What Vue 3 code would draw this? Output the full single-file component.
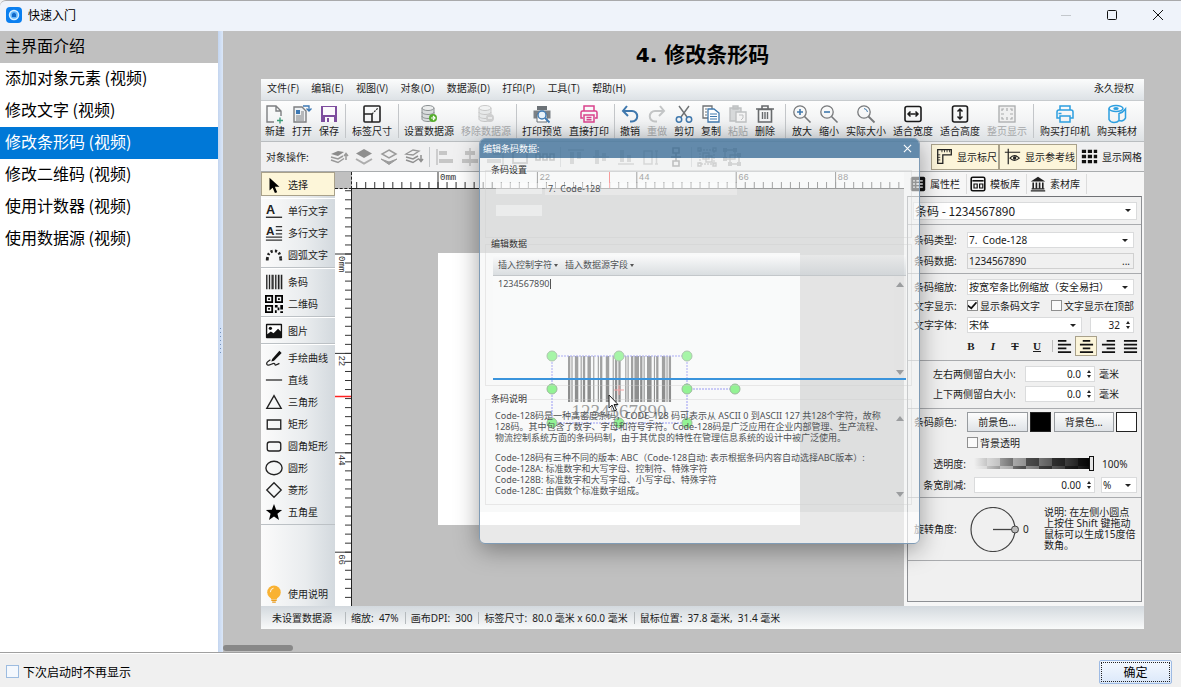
<script setup>
import { computed, onBeforeUnmount, onMounted, ref } from 'vue'

const topics = [
  { label: '主界面介绍', visited: true },
  { label: '添加对象元素 (视频)' },
  { label: '修改文字 (视频)' },
  { label: '修改条形码 (视频)' },
  { label: '修改二维码 (视频)' },
  { label: '使用计数器 (视频)' },
  { label: '使用数据源 (视频)' }
]
const current = ref(3)

const menus = ['文件(F)', '编辑(E)', '视图(V)', '对象(O)', '数据源(D)', '打印(P)', '工具(T)', '帮助(H)']

const database = (c) => `<g stroke="${c}" stroke-width="1" fill="#d9dcdd"><path d="M3 4v11c0 1.600 3 2.500 6 2.500s6-.9 6-2.500V4z"/><path fill="none" d="M3 8c0 1.600 3 2.500 6 2.500s6-.9 6-2.500M3 12c0 1.600 3 2.500 6 2.500s6-.9 6-2.500"/><ellipse cx="9" cy="4" rx="6" ry="2.500" fill="#eceeee"/></g>`

const icons = {
  new: '<path d="M9 18H2V2h9l5 5v5M11 2v5h5" fill="none" stroke="#7d7f81" stroke-width="1.400"/><path d="M12 16.500h6M15 13.500v6" stroke="#3f9c78" stroke-width="1.400"/>',
  open: '<path d="M2 3h8l4 4v11H2z" fill="#eef1f3" stroke="#7d7f81" stroke-width="1.400"/><path d="M4 6h4v4H4z" fill="#3c78b4"/><path d="M9 8h3M9 10h3M4 12h8M4 14h8M4 16h8" stroke="#7d7f81"/><path d="M11 2h6v5M14.500 4.500L17 7l2.500-2.500" fill="none" stroke="#3c78b4" stroke-width="1.300"/>',
  save: '<path d="M2 2h16v16H2z" fill="#7e4d9e"/><path d="M4 3h12v8H4z" fill="#fbf9fc"/><path d="M6 13h9v5H6z" fill="#fbf9fc"/><path d="M8 14h2v4H8z" fill="#7e4d9e"/>',
  size: '<rect x="2" y="2" width="16" height="16" rx="1" fill="none" stroke="#222" stroke-width="1.600"/><path d="M2 10h8v8" fill="none" stroke="#222" stroke-width="1.600"/><path d="M10 10l6-6" stroke="#333" stroke-width="1.200" stroke-dasharray="2 1"/>',
  dbset: database('#8b9092') + '<circle cx="14" cy="14" r="4" fill="#55ad2c"/><path d="M12 14h3M14 12l2 2-2 2" stroke="#fff" stroke-width="1.200" fill="none"/>',
  dbdel: `<g opacity=".5">${database('#999')}<circle cx="14" cy="14" r="4" fill="#a9a9a9"/><path d="M12 14h4" stroke="#fff" stroke-width="1.200"/></g>`,
  preview: '<path d="M5 2h10v4H5z" fill="#6b7176"/><path d="M1.500 6.500h17v8h-17z" fill="#7b8186"/><path d="M5 10h10v8H5z" fill="#fff" stroke="#6b7176"/><circle cx="10" cy="11" r="4" fill="#e8f2fa" stroke="#3f7bb5" stroke-width="1.400"/><path d="M13 14l4.500 4.500" stroke="#3f7bb5" stroke-width="1.800"/>',
  print: '<g fill="none" stroke="#d9428c" stroke-width="1.500"><path d="M5 7V2h10v5M4 14H2V8.500Q2 7 3.500 7h13q1.500 0 1.500 1.500V14H16M5 11h10v7H5zM7.500 13.500h5M7.500 15.800h5"/></g>',
  undo: '<path d="M7 2L3 7l5 5M3 7h9a5 5 0 010 10.500h-2" fill="none" stroke="#3f78ad" stroke-width="2"/>',
  redo: '<path d="M13 2l4 5-5 5M17 7H8a5 5 0 000 10.500h2" fill="none" stroke="#c3c5c6" stroke-width="2"/>',
  cut: '<path d="M5 2l8 11M15 2L7 13" stroke="#6f7274" stroke-width="1.400"/><g fill="none" stroke="#3f78ad" stroke-width="1.500"><circle cx="5" cy="15.500" r="2.700"/><circle cx="15" cy="15.500" r="2.700"/></g>',
  copy: '<path d="M2 2h9v12H2z" fill="#fff" stroke="#6f7274" stroke-width="1.300"/><path d="M4 5h2M4 8h2M4 11h2" stroke="#6f7274"/><path d="M7 5h6l5 4v9H7z" fill="#fff" stroke="#3f78ad" stroke-width="1.300"/><path d="M9 10h7M9 12.500h7M9 15h7" stroke="#3f78ad"/>',
  paste: '<path d="M2 4h11v13H2zM5 2h5v3H5z" fill="#d7d9da" stroke="#bfc1c2" stroke-width="1.400"/><path d="M8 8h10v10H8z" fill="#f4f4f4" stroke="#bfc1c2" stroke-width="1.400"/><path d="M11 11h4v3l-2 2" fill="none" stroke="#bfc1c2"/>',
  trash: '<path d="M1 5h18M7 4.500V2h6v2.500" fill="none" stroke="#686b6d" stroke-width="1.600"/><path d="M3.500 5.500h13V18h-13z" fill="none" stroke="#686b6d" stroke-width="1.600"/><path d="M7.500 8v7M10 8v7M12.500 8v7" stroke="#686b6d" stroke-width="1.400"/>',
  zoomin: '<circle cx="8" cy="8" r="6.200" fill="none" stroke="#77797b" stroke-width="1.300"/><path d="M12.500 12.500l6 6" stroke="#77797b" stroke-width="1.600"/><path d="M5 8h6M8 5v6" stroke="#3f78ad" stroke-width="1.600"/>',
  zoomout: '<circle cx="8" cy="8" r="6.200" fill="none" stroke="#77797b" stroke-width="1.300"/><path d="M12.500 12.500l6 6" stroke="#77797b" stroke-width="1.600"/><path d="M5 8h6" stroke="#3f78ad" stroke-width="1.600"/>',
  zoom: '<circle cx="8" cy="8" r="6.200" fill="none" stroke="#77797b" stroke-width="1.300"/><path d="M12.500 12.500l6 6" stroke="#77797b" stroke-width="1.800"/><path d="M8 4.500q3 .5 3.500 3.500" fill="none" stroke="#3f78ad"/>',
  fitw: '<rect x="2" y="2.500" width="16" height="15" rx="2" fill="none" stroke="#1b1b1b" stroke-width="1.600"/><path d="M5 10h10M7.500 7.500L5 10l2.500 2.500M12.500 7.500L15 10l-2.500 2.500" fill="none" stroke="#1b1b1b" stroke-width="1.500"/>',
  fith: '<rect x="2.500" y="2" width="15" height="16" rx="2" fill="none" stroke="#1b1b1b" stroke-width="1.600"/><path d="M10 5v10M7.500 7.500L10 5l2.500 2.500M7.500 12.500L10 15l2.500-2.500" fill="none" stroke="#1b1b1b" stroke-width="1.500"/>',
  fitp: '<rect x="2" y="2" width="16" height="16" fill="#f0f0f0" stroke="#a9abac" stroke-width="1.300"/><path d="M10 4v3M10 13v3M4 10h3M13 10h3M5 7V5h2M13 5h2v2M5 13v2h2M15 13v2h-2" fill="none" stroke="#a9abac" stroke-width="1.200"/>',
  buyprint: '<g fill="none" stroke="#2d9fe0" stroke-width="1.500"><path d="M5 6V2h10v4M5 14H2V8q0-2 2-2h12q2 0 2 2v6H15M5 12h10v6H5zM3.500 9.500h3"/></g>',
  buyroll: '<g fill="none" stroke="#2d9fe0" stroke-width="1.500"><ellipse cx="9" cy="4.500" rx="7" ry="3"/><ellipse cx="9" cy="4.500" rx="2" ry=".8"/><path d="M2 4.500v11q1.500 3 5 3t5-2v-7q4-1 6.500-4.500v9q-2 4-6.500 2.500"/></g>',
  layer1: '<path d="M2 7l7-3 6 1-6 4z" fill="#8b8b8b"/><path d="M2 10l7 2 5-3M2 13l7 2.500 6-4M17 13V7M15 9l2-2.500L19 9" fill="none" stroke="#999" stroke-width="1.500"/>',
  layer2: '<path d="M10 2l8 4.500-8 4.500-8-4.500z" fill="#8f8f8f"/><path d="M2 12l8 4.500 8-4.500" fill="none" stroke="#adadad" stroke-width="2"/>',
  layer3: '<path d="M10 3l7 4-7 4-7-4z" fill="none" stroke="#9b9b9b" stroke-width="1.500"/><path d="M2 12l8 3 8-3-8 5.500z" fill="#9b9b9b" stroke="#9b9b9b"/>',
  layer4: '<path d="M2 7l7-4 6 1-6 4z" fill="none" stroke="#979797" stroke-width="1.300"/><path d="M2 10l7 2 5-3M2 13l7 2.500 6-4M17 8v6M15 12l2 2.500 2-2.500" fill="none" stroke="#8f8f8f" stroke-width="1.500"/>',
  alignL: '<path d="M2 2v16" stroke="#c2c2c2" stroke-width="1.500"/><path d="M4 4h8v4H4zM4 12h14v4H4z" fill="#c6c6c6"/>',
  alignC: '<path d="M10 1v18" stroke="#c2c2c2" stroke-width="1.500"/><path d="M5 4h10v4H5zM2 12h16v4H2z" fill="#c6c6c6"/>',
  alignR: '<path d="M18 2v16" stroke="#b5b5b5" stroke-width="1.500"/><path d="M8 4h8v4H8zM2 12h14v4H2z" fill="#bbb"/>',
  box: '<rect x="3" y="5" width="14" height="11" fill="none" stroke="#a5a5a5" stroke-width="1.800"/>',
  chain: '<path d="M1 7h4v6H1zM15 7h4v6h-4zM8 7h4v6H8zM5 10h3M12 10h3" fill="none" stroke="#8d8d8d" stroke-width="1.600"/>',
  top: '<path d="M2 3h16" stroke="#b0b0b0" stroke-width="1.500"/><path d="M4 5h4v12H4zM11 5h4v7h-4z" fill="#b5b5b5"/>',
  mid: '<path d="M2 10h16" stroke="#b0b0b0" stroke-width="1.500"/><path d="M4 3h4v14H4zM11 6h4v8h-4z" fill="#b5b5b5"/>',
  bottom: '<path d="M2 17h16" stroke="#b0b0b0" stroke-width="1.500"/><path d="M4 3h4v12H4zM11 8h4v7h-4z" fill="#b5b5b5"/>',
  same: '<path d="M3 4h8v13H3zM14 4h3M14 17h3M15.500 4v13" fill="none" stroke="#b0b0b0" stroke-width="1.500"/>',
  vchain: '<path d="M7 1h6v5H7zM7 14h6v5H7zM10 6v8M5 10h10" fill="none" stroke="#777" stroke-width="1.600"/>',
  group: '<path d="M3 3h14v14H3z" fill="none" stroke="#a5a5a5" stroke-width="1.300" stroke-dasharray="2 1"/><path d="M6 6h6v6H6zM9 9h6v6H9zM1 1h3v3H1zM16 1h3v3h-3zM1 16h3v3H1zM16 16h3v3h-3z" fill="none" stroke="#9d9d9d" stroke-width="1.400"/>',
  ungroup: '<path d="M3 3h10v9H3zM8 8h9v9H8z" fill="none" stroke="#9d9d9d" stroke-width="1.400"/><path d="M1 1h4v4H1zM11 1h4v4h-4zM1 10h4v4H1zM15 15h4v4h-4zM6 15h4v4H6zM15 6h4v4h-4z" fill="#a5a5a5"/>',
  ruler: '<path d="M2 2h16v6H8v10H2z" fill="none" stroke="#222" stroke-width="1.500"/><path d="M7 2v3M10 2v3M13 2v3M16 2v3M2 8h3M2 11h3M2 14h3" stroke="#222"/>',
  guide: '<path d="M5 1v18M1 5h18" stroke="#222" stroke-width="1.400"/><path d="M7 12q5-6 11 0-6 5-11 0z" fill="none" stroke="#222" stroke-width="1.300"/><circle cx="12.500" cy="11.800" r="2" fill="#222"/>',
  grid: '<path d="M1 2h5v4H1zM8 2h5v4H8zM15 2h4v4h-4zM1 8h5v4H1zM8 8h5v4H8zM15 8h4v4h-4zM1 14h5v4H1zM8 14h5v4H8zM15 14h4v4h-4z" fill="#111"/>',
  pointer: '<path d="M5 2v14l3.500-3 2.500 6 2.500-1-2.500-6H16z" fill="#000"/>',
  line1: '<text x="1" y="13" font-family="Liberation Sans" font-size="14" font-weight="bold" fill="#222">A</text><path d="M1 17h18" stroke="#333" stroke-width="1.600"/>',
  line2: '<text x="1" y="12" font-family="Liberation Sans" font-size="13" font-weight="bold" fill="#222">A</text><path d="M12 3h7M12 7h7M12 11h7M1 14.500h18M1 18h18" stroke="#333" stroke-width="1.400"/>',
  arc: '<path d="M2.500 15Q3 6 10 5.500T17.500 15" fill="none" stroke="#222" stroke-width="3" stroke-dasharray="2.500 2.200"/><path d="M1 15h3M16 15h3" stroke="#222" stroke-width="2"/>',
  barcode: '<path d="M2 2v16M5 2v16M8 2v16M12 2v16M15 2v16M18.500 2v16" stroke="#222" stroke-width="1.500"/><path d="M9.500 2v16M16.500 2v16" stroke="#555"/>',
  qr: '<path d="M1 1h7v7H1zM12 1h7v7h-7zM1 12h7v7H1z" fill="none" stroke="#000" stroke-width="2"/><path d="M3.500 3.500h2v2h-2zM14.500 3.500h2v2h-2zM3.500 14.500h2v2h-2zM11 11h3v3h-3zM14 14h2v3h-2zM17 11h3v5h-3zM11 17h2v3h-2zM17 18h3v2h-3z" fill="#000"/>',
  image: '<rect x="1" y="2" width="18" height="16" rx="1" fill="#111"/><path d="M2.500 3.500h15v7l-3-3-5 5-3-2-4 3z" fill="#fff"/><circle cx="6" cy="7" r="1.800" fill="#111"/>',
  curve: '<path d="M8 11l8-9 2.500 2.500L10 13l-3 1z" fill="#111"/><path d="M6 12q-5 3-4 5t5 0 4 0 5-1" fill="none" stroke="#222" stroke-width="1.400"/>',
  line: '<path d="M1 10h18" stroke="#333" stroke-width="1.500"/>',
  tri: '<path d="M10 3l8 14H2z" fill="none" stroke="#222" stroke-width="1.500"/>',
  rect: '<path d="M2.500 5.500h15v10h-15z" fill="none" stroke="#222" stroke-width="1.500"/>',
  rrect: '<rect x="2.500" y="5.500" width="15" height="10" rx="2.500" fill="none" stroke="#222" stroke-width="1.500"/>',
  circle: '<ellipse cx="10" cy="10" rx="9" ry="7.500" fill="none" stroke="#222" stroke-width="1.500"/>',
  diamond: '<path d="M10 2l8 8-8 8-8-8z" fill="none" stroke="#222" stroke-width="1.500"/>',
  star: '<path d="M10 1l2.400 6.500 6.600.3-5.200 4.100L15.600 19 10 15l-5.600 4 1.800-7.100L1 7.800l6.600-.3z" fill="#000"/>',
  bulb: '<circle cx="10" cy="8" r="7.500" fill="#f9b233"/><path d="M6 13h8l-1 3H7z" fill="#f9b233"/><path d="M7 17h6M8 19h4" stroke="#e99c1f" stroke-width="1.500"/><path d="M6 8q0-4 3.500-4.500" stroke="#fff" fill="none"/>',
  list: '<rect x="1" y="1" width="18" height="18" rx="2" fill="#111"/><path d="M4 6h2M4 10h2M4 14h2M8 6h8M8 10h8M8 14h8" stroke="#fff" stroke-width="1.600"/>',
  template: '<rect x="1.500" y="1.500" width="17" height="17" rx="2" fill="none" stroke="#111" stroke-width="2"/><path d="M3 6h14" stroke="#111" stroke-width="2"/><path d="M5 10h4v5H5zM12 10h4v5h-4z" fill="none" stroke="#111" stroke-width="1.500"/>',
  bank: '<path d="M1 7l9-6 9 6z" fill="#222"/><path d="M4 8v8M8 8v8M12 8v8M16 8v8" stroke="#222" stroke-width="2"/><path d="M2 16h16M1 18.500h18" stroke="#222" stroke-width="1.500"/>'
}

const toolGroups = [
  { kind: 'first', items: [['new', '新建'], ['open', '打开'], ['save', '保存']] },
  { kind: '', items: [['size', '标签尺寸']] },
  { kind: 'tight', items: [['dbset', '设置数据源'], ['dbdel', '移除数据源', true]] },
  { kind: 'tight', items: [['preview', '打印预览'], ['print', '直接打印']] },
  { kind: 'edit', items: [['undo', '撤销'], ['redo', '重做', true], ['cut', '剪切'], ['copy', '复制'], ['paste', '粘贴', true], ['trash', '删除']] },
  { kind: '', items: [['zoomin', '放大'], ['zoomout', '缩小'], ['zoom', '实际大小'], ['fitw', '适合宽度'], ['fith', '适合高度'], ['fitp', '整页显示', true]] },
  { kind: 'last', items: [['buyprint', '购买打印机'], ['buyroll', '购买耗材']] }
]

const arrange = [
  ['layer1', 'layer2', 'layer3', 'layer4'],
  ['alignL', 'alignC', 'alignR', 'box', 'chain'],
  ['top', 'mid', 'bottom', 'same', 'vchain'],
  ['group', 'ungroup']
]

const shapes = [
  [['line1', '单行文字'], ['line2', '多行文字'], ['arc', '圆弧文字']],
  [['barcode', '条码'], ['qr', '二维码']],
  [['image', '图片']],
  [['curve', '手绘曲线'], ['line', '直线'], ['tri', '三角形'], ['rect', '矩形'], ['rrect', '圆角矩形'], ['circle', '圆形'], ['diamond', '菱形'], ['star', '五角星']]
]

// Rulers: a long mark every 22 mm, a short one every 2 mm, as many as the canvas has room for
const MAJOR = 99.4
const MINOR = MAJOR / 11
const ORIGIN_X = 86
const ORIGIN_Y = 65
const canvas = ref(null)
const area = ref({ w: 0, h: 0 })
const marks = (origin, step, from, size) => {
  const list = []
  for (let n = from; origin + n * step < size; n++) list.push({ n, at: origin + n * step })
  return list
}
const hMinor = computed(() => marks(ORIGIN_X, MINOR, -9, area.value.w))
const vMinor = computed(() => marks(ORIGIN_Y, MINOR, -7, area.value.h))
const hMajor = computed(() => marks(ORIGIN_X, MAJOR, 0, area.value.w - 20))
const vMajor = computed(() => marks(ORIGIN_Y, MAJOR, 0, area.value.h - 20))
const markText = (n) => (n ? String(n * 22) : '0mm')
const measure = () => {
  area.value = { w: canvas.value.clientWidth, h: canvas.value.clientHeight }
}
onMounted(() => {
  measure()
  window.addEventListener('resize', measure)
})
onBeforeUnmount(() => window.removeEventListener('resize', measure))

// Code-128 (set C) module widths for 1234567890
const modules = '211232' + '112232' + '131123' + '331121' + '241112' + '214121' + '124211' + '2331112'
const bars = []
let pos = 0
modules.split('').forEach((w, i) => {
  if (i % 2 === 0) bars.push({ x: pos, w: Number(w) })
  pos += Number(w)
})
const handles = [[6, 6], [73, 6], [141, 6], [6, 39], [141, 39], [189, 39], [6, 73], [73, 73], [141, 73]]

const showText = ref(true)
const textTop = ref(false)
const bgClear = ref(false)
const skipNext = ref(false)
const opacity = ref(100)
const code = ref('1234567890')
const align = ref(1)
const alignLines = [
  'M1 2h9M1 6h14M1 10h9M1 14h14',
  'M4 2h8M1 6h14M4 10h8M1 14h14',
  'M6 2h9M1 6h14M6 10h9M1 14h14',
  'M1 2h14M1 6h14M1 10h14M1 14h14'
]
</script>

<template>
  <div class="window">
    <header class="titlebar">
      <svg class="logo" viewBox="0 0 16 16"><rect width="16" height="16" rx="4" fill="#0a7ff0" /><circle cx="8" cy="8" r="4.500" fill="#63b6fa" stroke="#d9efff" stroke-width="1.500" /><path d="M6 10V7l2-1.500L10 7v3z" fill="#1268c8" /></svg>
      <h1>快速入门</h1>
      <div class="winbtns">
        <button type="button" aria-label="最小化" disabled><svg viewBox="0 0 12 12"><path d="M1 6.500h10" stroke="#c3c7cc" /></svg></button>
        <button type="button" aria-label="最大化"><svg viewBox="0 0 12 12"><rect x="1.500" y="1.500" width="9" height="9" rx="1" fill="none" stroke="#111" /></svg></button>
        <button type="button" aria-label="关闭"><svg viewBox="0 0 12 12"><path d="M1 1l10 10M11 1L1 11" stroke="#111" /></svg></button>
      </div>
    </header>

    <div class="main">
      <nav class="topics">
        <button v-for="(t, i) in topics" :key="t.label" type="button" :class="{ visited: t.visited, active: current === i }" @click="current = i">{{ t.label }}</button>
      </nav>
      <div class="splitter"><i></i></div>

      <section class="stage">
        <h2><span>4. </span>修改条形码</h2>

        <div class="app">
          <div class="menu">
            <button v-for="m in menus" :key="m" type="button">{{ m }}</button>
            <span class="license">永久授权</span>
          </div>

          <div class="toolbar">
            <div v-for="(g, gi) in toolGroups" :key="gi" class="tgroup" :class="g.kind">
              <button v-for="it in g.items" :key="it[1]" type="button" :disabled="it[2]">
                <svg viewBox="0 0 20 20" v-html="icons[it[0]]"></svg>
                <span>{{ it[1] }}</span>
              </button>
            </div>
          </div>

          <div class="arrange">
            <span class="caption">对象操作:</span>
            <div v-for="(g, gi) in arrange" :key="gi" class="agroup">
              <button v-for="n in g" :key="n" type="button" :aria-label="n"><svg viewBox="0 0 20 20" v-html="icons[n]"></svg></button>
            </div>
            <div class="toggles">
              <button type="button" class="on"><svg viewBox="0 0 20 20" v-html="icons.ruler"></svg>显示标尺</button>
              <button type="button" class="on"><svg viewBox="0 0 20 20" v-html="icons.guide"></svg>显示参考线</button>
              <button type="button"><svg viewBox="0 0 20 20" v-html="icons.grid"></svg>显示网格</button>
            </div>
          </div>

          <div class="workspace">
            <div class="shapes">
              <button type="button" class="picked"><svg viewBox="0 0 20 20" v-html="icons.pointer"></svg>选择</button>
              <div v-for="(g, gi) in shapes" :key="gi" class="sgroup">
                <button v-for="s in g" :key="s[1]" type="button"><svg viewBox="0 0 20 20" v-html="icons[s[0]]"></svg>{{ s[1] }}</button>
              </div>
              <button type="button" class="help"><svg viewBox="0 0 20 20" v-html="icons.bulb"></svg>使用说明</button>
            </div>

            <div class="board">
              <div class="corner"></div>
              <svg class="hruler">
                <path v-for="t in hMinor" :key="t.n" :d="`M${t.at} 10v6`" stroke="#333" />
                <g v-for="t in hMajor" :key="'m' + t.n">
                  <path :d="`M${t.at} 0v16`" stroke="#333" />
                  <text :x="t.at + 2" y="8">{{ markText(t.n) }}</text>
                </g>
                <path d="M257.500 0v16" stroke="#f22" />
              </svg>
              <svg class="vruler">
                <path v-for="t in vMinor" :key="t.n" :d="`M10 ${t.at}h6`" stroke="#333" />
                <g v-for="t in vMajor" :key="'m' + t.n">
                  <path :d="`M0 ${t.at}h16`" stroke="#333" />
                  <text :transform="`translate(4 ${t.at + 2}) rotate(90)`">{{ markText(t.n) }}</text>
                </g>
                <path d="M0 207.500h16" stroke="#f22" stroke-width="1.500" />
              </svg>
              <div ref="canvas" class="canvas">
                <div class="paper"></div>
                <svg class="object" viewBox="0 0 196 80">
                  <g transform="translate(22 6) scale(1.145 1)"><rect v-for="b in bars" :key="b.x" :x="b.x" y="0" :width="b.w" height="46" fill="#000" /></g>
                  <text x="73" y="68" text-anchor="middle" font-family="Liberation Serif" font-size="19" fill="#222">1234567890</text>
                  <rect x="6" y="6" width="135" height="67" fill="none" stroke="#2020f0" stroke-dasharray="2 1" />
                  <path d="M141 39h48" stroke="#2020f0" stroke-dasharray="2 1" />
                  <path d="M73 35v10M68 40h10" stroke="#f33" />
                  <circle v-for="(h, i) in handles" :key="i" :cx="h[0]" :cy="h[1]" r="5" fill="#10f010" stroke="#206820" />
                </svg>
              </div>
            </div>

            <aside class="props">
              <div class="tabs">
                <button type="button"><svg viewBox="0 0 20 20" v-html="icons.list"></svg>属性栏</button>
                <button type="button"><svg viewBox="0 0 20 20" v-html="icons.template"></svg>模板库</button>
                <button type="button"><svg viewBox="0 0 20 20" v-html="icons.bank"></svg>素材库</button>
              </div>
              <div class="sheet">
                <div class="sec s-name">
                  <span class="pick big"><select aria-label="对象"><option>条码 - 1234567890</option></select></span>
                </div>
                <div class="sec s-data">
                  <div class="row"><label for="ctype">条码类型:</label><span class="pick"><select id="ctype"><option>7.&nbsp; Code-128</option></select></span></div>
                  <div class="row"><label for="cdata">条码数据:</label><span class="more"><input id="cdata" value="1234567890"><button type="button">...</button></span></div>
                </div>
                <div class="sec s-text">
                  <div class="row"><label for="cscale">条码缩放:</label><span class="pick"><select id="cscale"><option>按宽窄条比例缩放（安全易扫）</option></select></span></div>
                  <div class="row">
                    <span class="lab">文字显示:</span>
                    <label class="check"><input v-model="showText" type="checkbox">显示条码文字</label>
                    <label class="check push"><input v-model="textTop" type="checkbox">文字显示在顶部</label>
                  </div>
                  <div class="row"><label for="cfont">文字字体:</label><span class="pick"><select id="cfont"><option>宋体</option></select></span><span class="spin small"><input aria-label="字号" value="32"></span></div>
                  <div class="row styles">
                    <span class="fmt"><button type="button"><b>B</b></button><button type="button"><i>I</i></button><button type="button"><s>T</s></button><button type="button"><u>U</u></button></span>
                    <span class="aligns"><button v-for="(d, i) in alignLines" :key="i" type="button" aria-label="对齐" :class="{ on: align === i }" @click="align = i"><svg viewBox="0 0 16 16"><path :d="d" stroke="#111" stroke-width="2" /></svg></button></span>
                  </div>
                </div>
                <div class="sec s-pad">
                  <div class="row"><label class="wide" for="padx">左右两侧留白大小:</label><span class="spin"><input id="padx" value="0.0"></span><span class="unit">毫米</span></div>
                  <div class="row"><label class="wide" for="pady">上下两侧留白大小:</label><span class="spin"><input id="pady" value="0.0"></span><span class="unit">毫米</span></div>
                </div>
                <div class="sec s-color">
                  <div class="row"><span class="lab">条码颜色:</span><button type="button" class="push-btn">前景色...</button><i class="swatch dark"></i><button type="button" class="push-btn">背景色...</button><i class="swatch"></i></div>
                  <div class="row"><span class="lab"></span><label class="check"><input v-model="bgClear" type="checkbox">背景透明</label></div>
                  <div class="row"><label class="mid" for="alpha">透明度:</label><input id="alpha" v-model="opacity" class="range" type="range" min="0" max="100"><span class="pct">{{ opacity }}%</span></div>
                  <div class="row"><label class="mid" for="shrink">条宽削减:</label><span class="spin grow"><input id="shrink" value="0.00"></span><span class="pick tiny"><select aria-label="单位"><option>%</option></select></span></div>
                </div>
                <div class="sec s-rot">
                  <span class="lab">旋转角度:</span>
                  <svg viewBox="0 0 52 45"><circle cx="25" cy="22.500" r="22" fill="none" stroke="#444" stroke-width="1.200" /><path d="M25 22.500h20" stroke="#444" stroke-width="1.300" /><circle cx="47" cy="22.500" r="3.500" fill="#bbb" stroke="#444" /></svg>
                  <span class="deg">0</span>
                  <p>说明: 在左侧小圆点<br>上按住 Shift 键拖动<br>鼠标可以生成15度倍<br>数角。</p>
                </div>
              </div>
            </aside>
          </div>

          <div class="status">
            <span>未设置数据源</span><span>缩放:&nbsp; 47%</span><span>画布DPI:&nbsp; 300</span><span>标签尺寸:&nbsp; 80.0 毫米 x 60.0 毫米</span><span>鼠标位置:&nbsp; 37.8 毫米,&nbsp; 31.4 毫米</span>
          </div>

          <div class="dialog" role="dialog" aria-label="编辑条码数据">
            <div class="dhead"><strong>编辑条码数据:</strong><button type="button" aria-label="关闭"><svg viewBox="0 0 10 10"><path d="M1 1l8 8M9 1L1 9" stroke="#fff" stroke-width="1.200" /></svg></button></div>
            <div class="dbody">
              <fieldset class="f1">
                <legend>条码设置</legend>
                <div class="frow"><i></i><span>7.&nbsp; Code-128</span></div>
                <div class="frow"><i></i></div>
              </fieldset>
              <fieldset class="f2">
                <legend>编辑数据</legend>
                <div class="dtools"><button type="button">插入控制字符</button><button type="button">插入数据源字段</button></div>
                <div class="dtext"><textarea v-model="code" aria-label="编辑数据"></textarea><span class="bar"><i class="up"></i><i class="down"></i></span><em></em></div>
              </fieldset>
              <fieldset class="f3">
                <legend>条码说明</legend>
                <div class="ddesc">
                  <div>
                    <p>Code-128码是一种高密度条码，CODE_128 码可表示从 ASCII 0 到ASCII 127 共128个字符，故称<br>128码。其中包含了数字、字母和符号字符。Code-128码是广泛应用在企业内部管理、生产流程、<br>物流控制系统方面的条码码制，由于其优良的特性在管理信息系统的设计中被广泛使用。</p>
                    <p>Code-128码有三种不同的版本: ABC（Code-128自动: 表示根据条码内容自动选择ABC版本）:<br>Code-128A: 标准数字和大写字母、控制符、特殊字符<br>Code-128B: 标准数字和大写字母、小写字母、特殊字符<br>Code-128C: 由偶数个标准数字组成。</p>
                  </div>
                  <span class="bar"><i class="up"></i><i class="down"></i></span>
                </div>
              </fieldset>
            </div>
            <div class="dfoot"></div>
          </div>

          <svg class="cursor" viewBox="0 0 12 18"><path d="M1 1v13l3-3 2.500 6 2-1-2.500-5.500H10z" fill="#fff" stroke="#222" /></svg>
        </div>
        <i class="hscroll"></i>
      </section>
    </div>

    <footer class="bottom">
      <label class="check"><input v-model="skipNext" type="checkbox">下次启动时不再显示</label>
      <button type="button" class="ok"><span>确定</span></button>
    </footer>
  </div>
</template>

<style>
body { margin: 0; background: #f0f0f0; }
</style>

<style scoped>
* { box-sizing: border-box; }
button, input, select, textarea { font: inherit; color: inherit; background: none; border: 0; margin: 0; padding: 0; border-radius: 0; outline: none; }
button { white-space: nowrap; }
svg { display: block; flex: none; }
h1, h2, p { margin: 0; font-weight: normal; }
.window { min-height: 100vh; display: flex; flex-direction: column; font-family: "Noto Sans CJK SC", "Liberation Sans", sans-serif; font-size: 10px; line-height: 12px; color: #000; background: #f0f0f0; }

.titlebar { height: 31px; flex: none; display: flex; align-items: center; padding: 0 0 2px 6px; background: #eff3fa; border-top: 1px solid #a9a9ab; border-radius: 6px 0 0 0; }
.logo { width: 16px; height: 16px; }
h1 { font-size: 12px; margin-left: 6px; flex: 1; }
.winbtns { display: flex; }
.winbtns button { width: 46px; height: 28px; display: grid; place-items: center; }
.winbtns svg { width: 12px; height: 12px; }

.main { flex: 1; display: flex; }
.topics { width: 218px; flex: none; background: #fff; }
.topics button { display: block; width: 100%; height: 32px; padding: 0 0 3px 5px; font-size: 16px; line-height: 29px; text-align: left; }
.topics .visited { background: #c0c0c0; }
.topics .active { background: #0078d7; color: #fff; }
.splitter { width: 5px; flex: none; display: flex; align-items: center; justify-content: center; background: linear-gradient(90deg, #c3d5ef, #dbe7f8); }
.splitter i { width: 1px; height: 27px; background: repeating-linear-gradient(#7693bf 0 1px, transparent 1px 4px); }
.stage { flex: 1; min-width: 0; position: relative; padding: 0 37px 0 38px; background: #c0c0c0; }
h2 { height: 48px; font-size: 21px; font-weight: bold; line-height: 45px; text-align: center; }
h2 span { font-family: "DejaVu Sans", sans-serif; font-size: 20px; }
.hscroll { position: absolute; left: 0; bottom: 1px; width: 70px; height: 6px; border-radius: 3px; background: #888; }

.app { position: relative; color: #1c1c1c; background: #f0f1f2; }
.menu { display: flex; align-items: center; gap: 12px; height: 22px; padding: 0 10px 3px 6px; background: linear-gradient(#fbfcfc, #dde2e6); border-bottom: 1px solid #c7cbce; }
.license { margin-left: auto; }
.toolbar { height: 41px; display: flex; align-items: center; background: linear-gradient(#fdfdfd, #f2f3f4 50%, #dde1e4); border-bottom: 1px solid #b9bdc0; }
.tgroup { display: flex; gap: 7px; padding: 0 6px; border-right: 1px solid #c3c6c9; height: 34px; }
.tgroup.first { padding-left: 4px; }
.tgroup.tight { padding: 0 5px; }
.tgroup.edit { padding: 0 10px 0 5px; }
.tgroup.last { border-right: 0; }
.tgroup button { display: flex; flex-direction: column; align-items: center; gap: 1px; }
.tgroup svg { width: 20px; height: 20px; }
.tgroup button:disabled { color: #a6a8aa; }
.arrange { height: 30px; display: flex; align-items: center; padding: 0 0 0 5px; background: #f0f0f1; border-bottom: 1px solid #a9acae; }
.caption { width: 58px; }
.agroup { display: flex; gap: 5px; padding: 0 5px; }
.agroup + .agroup { border-left: 1px solid #c3c6c9; }
.agroup svg { width: 20px; height: 20px; }
.toggles { margin-left: auto; display: flex; }
.toggles button { display: flex; align-items: center; gap: 4px; height: 26px; padding: 0 2px 0 4px; }
.toggles svg { width: 17px; height: 17px; }
.toggles .on { background: #fcf5da; border: 1px solid #a9a18a; padding: 0 1px 0 4px; }

.workspace { display: flex; }
.shapes { width: 74px; flex: none; display: flex; flex-direction: column; background: linear-gradient(90deg, #fbfbfb, #e9ecee 60%, #d3d9de); }
.shapes button { display: flex; align-items: center; gap: 5px; width: 100%; height: 22px; padding-left: 4px; }
.shapes svg { width: 18px; height: 18px; }
.shapes .picked { background: #fdf6d9; border: 1px solid #a9a18a; height: 24px; margin-bottom: 2px; padding: 1px 0 0 3px; }
.sgroup { padding: 1px 0 1px; border-top: 1px solid #fff; border-bottom: 1px solid #bcc1c5; }
.sgroup + .sgroup { padding-top: 2px; }
.shapes .help { margin: auto 0 1px; }
.board { flex: 1; min-width: 0; display: grid; grid-template: 17px 1fr / 17px 1fr; background: #fff; }
.corner { background: #c0c0c0; border-right: 1px dashed #222; border-bottom: 1px dashed #222; }
.hruler { width: 100%; height: 17px; border-bottom: 1px solid #222; background: #fff; }
.vruler { width: 17px; height: 100%; min-height: 417px; border-right: 1px solid #222; background: #fff; }
.hruler, .vruler { overflow: hidden; font: 9px "Liberation Mono", monospace; fill: #333; }
.canvas { position: relative; overflow: hidden; background: #c0c0c0; }
.paper { position: absolute; left: 86px; top: 64px; width: 362px; height: 272px; background: #fff; }
.object { position: absolute; left: 194px; top: 161px; width: 196px; height: 80px; }

.props { width: 240px; flex: none; display: flex; flex-direction: column; padding: 0 2px 4px 3px; background: #f6f6f6; }
.tabs { height: 24px; display: flex; align-items: center; }
.tabs button { display: flex; align-items: center; gap: 4px; width: 60px; height: 20px; padding-left: 3px; border-right: 1px solid #dcdcdc; }
.tabs svg { width: 16px; height: 16px; }
.sheet { flex: 1; border: 1px solid #8e9094; border-top-color: #707276; background: #f0f0f0; font-family: "Noto Sans", "Noto Sans CJK SC", sans-serif; }
.sec { border-bottom: 1px solid #a9abae; }
.row { display: flex; align-items: center; }
.row > label:not(.check), .lab { flex: none; width: 59px; padding-left: 6px; }
.row > label.wide { width: 117px; padding-left: 25px; }
.row > label.mid { width: 66px; padding: 0 8px 0 0; text-align: right; }
.s-name { padding: 5px 4px 4px 5px; }
.s-data { padding: 4px 7px 2px 0; }
.s-data .row { height: 21px; }
.s-text { padding: 3px 7px 2px 0; }
.s-text .row { height: 19px; }
.s-text .styles { height: 24px; padding-left: 59px; }
.s-pad { padding: 3px 4px 4px 0; }
.s-pad .row { height: 20px; }
.s-color { padding: 2px 4px 2px 0; }
.s-color .row { height: 21px; }
.pick { position: relative; display: flex; flex: 1; height: 16px; background: #fff; border: 1px solid #dadbdc; }
.pick select { appearance: none; width: 100%; padding: 0 14px 0 1px; }
.pick::after { content: ""; position: absolute; right: 5px; top: 6px; border: 3px solid transparent; border-top-color: #222; pointer-events: none; }
.pick.big { height: 18px; font-size: 12px; font-family: "Noto Sans CJK SC", sans-serif; }
.pick.tiny { flex: none; width: 36px; margin-left: 6px; }
.more { flex: 1; display: flex; height: 16px; border: 1px solid #d0d0d0; }
.more input { flex: 1; min-width: 0; padding-left: 1px; }
.more button { width: 14px; }
.spin { position: relative; display: flex; width: 70px; height: 16px; background: #fff; border: 1px solid #dadbdc; }
.spin input { width: 100%; padding-right: 13px; text-align: right; }
.spin::before, .spin::after { content: ""; position: absolute; right: 3px; border: 2px solid transparent; }
.spin::before { top: 1px; border-bottom: 3px solid #222; }
.spin::after { bottom: 1px; border-top: 3px solid #222; }
.spin.small { width: 44px; margin-left: 8px; }
.spin.grow { flex: 1; }
.unit { margin-left: 4px; }
.check { display: flex; align-items: center; gap: 2px; white-space: nowrap; }
.check input { appearance: none; flex: none; width: 11px; height: 11px; border: 1px solid #8f8f8f; background: #fafafa; display: grid; place-items: center; }
.check input:checked::before { content: ""; width: 9px; height: 8px; background: #111; clip-path: polygon(0 40%, 35% 70%, 90% 0, 100% 20%, 38% 100%, 0 65%); }
.check.push { margin-left: auto; }
.fmt { display: flex; gap: 14px; padding-right: 11px; border-right: 1px solid #bbb; }
.fmt button { width: 8px; font-family: "Liberation Serif", serif; font-size: 11px; font-weight: bold; }
.aligns { display: flex; margin-left: auto; }
.aligns button { width: 22px; height: 20px; display: grid; place-items: center; border: 1px solid transparent; }
.aligns .on { background: #fcf5da; border-color: #a9a18a; }
.aligns svg { width: 15px; height: 15px; }
.push-btn { flex: 1; height: 20px; border: 1px solid #979b9f; background: linear-gradient(#fdfdfd, #dfe3e7); margin-right: 2px; }
.swatch { width: 21px; height: 20px; border: 1px solid #222; background: #fff; margin-right: 3px; }
.swatch:last-child { margin-right: 0; }
.swatch.dark { background: #000; }
.range { appearance: none; flex: 1; min-width: 0; height: 11px; background: linear-gradient(90deg, #f0f0f0, rgba(0, 0, 0, .4) 40%, #000), repeating-conic-gradient(#fff 0 25%, #888 0 50%) 0 0 / 26px 16px; }
.range::-webkit-slider-thumb { appearance: none; width: 5px; height: 15px; border: 1px solid #111; background: #e5e5e5; }
.pct { width: 43px; padding-left: 8px; }
.s-rot { display: flex; align-items: center; height: 63px; }
.s-rot .lab { width: 60px; }
.s-rot svg { width: 52px; height: 45px; }
.deg { width: 24px; padding-left: 3px; }
.s-rot p { line-height: 11px; white-space: nowrap; }

.status { display: flex; align-items: center; height: 23px; padding-left: 11px; background: linear-gradient(#d3d9de, #f9fafa); white-space: nowrap; font-family: "Noto Sans", "Noto Sans CJK SC", sans-serif; }
.status span { padding-right: 6px; margin-right: 5px; border-right: 1px solid #b5babd; }
.status span:first-child { padding-right: 13px; }
.status span:last-child { border: 0; }

.dialog { position: absolute; left: 218px; top: 59px; width: 441px; border: 1px solid #7f9bb5; border-radius: 6px; overflow: hidden; box-shadow: 0 6px 24px rgba(0, 0, 0, .36); color: #505356; font-family: "Noto Sans", "Noto Sans CJK SC", sans-serif; font-size: 9px; }
.dhead { height: 19px; display: flex; align-items: center; justify-content: space-between; padding: 0 7px 0 3px; background: rgba(78, 123, 160, .87); color: #fff; }
.dhead strong { font-weight: normal; }
.dhead svg { width: 9px; height: 9px; }
.dbody { padding: 6px 7px 7px 5px; background: rgba(243, 244, 245, .58); }
fieldset { margin: 0; min-width: 0; padding: 0 5px 0 7px; border: 1px solid rgba(205, 205, 205, .4); }
legend { margin-left: -2px; padding: 0; height: 12px; color: #333; }
.f1 { height: 74px; }
.frow { display: flex; align-items: center; gap: 3px; margin: 7px 0 11px 3px; height: 11px; }
.frow i { width: 46px; height: 11px; background: rgba(255, 255, 255, .4); }
.frow span { width: 192px; padding-left: 3px; background: rgba(255, 255, 255, .3); }
.f2 { height: 148px; }
.dtools { display: flex; gap: 7px; height: 21px; margin-top: 5px; padding-left: 5px; background: linear-gradient(rgba(255, 255, 255, .3), rgba(205, 210, 214, .7)); border-bottom: 1px solid #c3c7ca; }
.dtools button { display: flex; align-items: center; gap: 2px; }
.dtools button::after { content: ""; border: 2px solid transparent; border-top: 3px solid #555; margin-top: 2px; }
.dtext { position: relative; display: flex; height: 104px; background: rgba(255, 255, 255, .18); border-bottom: 2px solid #3b94dc; }
.dtext textarea { flex: 1; resize: none; padding: 2px 5px; line-height: 12px; }
.dtext em { position: absolute; left: 57px; top: 3px; width: 1px; height: 10px; background: #555; }
.bar { width: 12px; display: flex; flex-direction: column; justify-content: space-between; align-items: center; padding: 3px 0; background: rgba(225, 225, 225, .5); }
.bar i { border: 4px solid transparent; }
.bar .up { border-top: 0; border-bottom: 5px solid #9b9d9f; margin-top: 3px; }
.bar .down { border-bottom: 0; border-top: 5px solid #9b9d9f; }
.f3 { height: 112px; margin-top: 7px; }
.ddesc { display: flex; justify-content: space-between; height: 90px; margin-top: 5px; padding-left: 2px; }
.ddesc p { line-height: 11px; white-space: nowrap; }
.ddesc p + p { margin-top: 9px; }
.ddesc > div { min-width: 0; }
.ddesc .bar { background: none; flex: none; }
.dfoot { height: 31px; background: rgba(255, 255, 255, .65); }
.cursor { position: absolute; left: 347px; top: 315px; width: 12px; height: 18px; }

.bottom { height: 35px; flex: none; display: flex; align-items: center; justify-content: space-between; padding: 3px 9px 0 6px; border-top: 1px solid #a0a0a0; box-shadow: inset 0 1px #fff; font-size: 12px; }
.bottom .check { gap: 4px; }
.bottom .check input { width: 13px; height: 13px; border-color: #9dbce0; background: #f4f8fd; }
.ok { width: 73px; height: 24px; padding: 1px; border: 1px solid #9ebbe4; border-radius: 2px; background: linear-gradient(#f5f9fe, #dbe8fa); }
.ok span { display: grid; place-items: center; height: 20px; border: 1px dotted #222; }
</style>
